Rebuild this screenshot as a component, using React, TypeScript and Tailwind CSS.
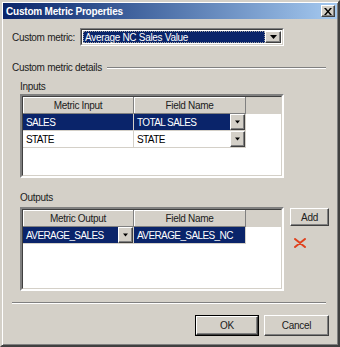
import React from 'react';

const raised =
  'border border-t-white border-l-white border-r-[#404040] border-b-[#404040] shadow-[inset_-1px_-1px_0_#808080]';

function Arrow({ size = 7 }: { size?: number }) {
  return (
    <svg width={size} height={4} viewBox="0 0 7 4">
      <path d="M0 0h7L3.5 4z" fill="#000" />
    </svg>
  );
}

function DropButton({ className = '' }: { className?: string }) {
  return (
    <div className={`flex items-center justify-center bg-[#d4d0c8] ${raised} ${className}`}>
      <Arrow size={5} />
    </div>
  );
}

function HeaderCell({ label, width }: { label: string; width: string }) {
  return (
    <div
      className={`${width} h-[17px] flex items-center justify-center bg-[#d4d0c8] border-r border-b border-r-[#808080] border-b-[#808080] shadow-[inset_1px_1px_0_#fff] text-[#202020]`}
    >
      {label}
    </div>
  );
}

function Cell({
  text,
  selected,
  dropdown,
  width,
}: {
  text: string;
  selected?: boolean;
  dropdown?: boolean;
  width: string;
}) {
  return (
    <div className={`${width} h-[17px] flex border-r border-b border-[#d4d0c8] bg-white`}>
      <div
        className={`flex-1 h-full flex items-center pl-[3px] overflow-hidden tracking-[-0.6px] ${
          selected ? 'bg-[#0a246a] text-white' : 'text-black'
        }`}
      >
        {text}
      </div>
      {dropdown && <DropButton className="w-[15px] h-full" />}
    </div>
  );
}

function Grid({ children }: { children: React.ReactNode }) {
  return (
    <div className="w-[264px] h-[84px] border-2 border-t-[#808080] border-l-[#808080] border-r-white border-b-white">
      <div className="w-full h-full bg-white border border-t-[#404040] border-l-[#404040] border-r-[#d4d0c8] border-b-[#d4d0c8] flex flex-col">
        {children}
      </div>
    </div>
  );
}

export default function App() {
  return (
    <div
      className="w-[340px] h-[347px] bg-[#d4d0c8] border-2 border-t-[#d4d0c8] border-l-[#d4d0c8] border-r-[#404040] border-b-[#404040] shadow-[inset_1px_1px_0_#fff,inset_-1px_-1px_0_#808080] p-[1px] flex flex-col text-[10px] leading-[13px] tracking-[-0.3px] whitespace-nowrap text-black"
      style={{ fontFamily: '"Liberation Sans", Arial, sans-serif' }}
    >
      {/* title bar */}
      <div className="h-[16px] flex items-center justify-between pl-[3px] pr-[2px] bg-gradient-to-r from-[#0a246a] to-[#a6caf0]">
        <span className="text-white font-bold text-[10px] tracking-[-0.2px]">Custom Metric Properties</span>
        <div className={`w-[14px] h-[12px] bg-[#d4d0c8] flex items-center justify-center ${raised}`}>
          <svg width="8" height="7" viewBox="0 0 8 7">
            <path d="M0 0h2l2 2.5L6 0h2L5 3.5 8 7H6L4 4.5 2 7H0l3-3.5z" fill="#000" />
          </svg>
        </div>
      </div>

      <div className="flex-1 flex flex-col pl-[9px]">
        {/* custom metric combo */}
        <div className="mt-[9px] flex items-center h-[18px]">
          <span className="w-[68px] text-[#202020]">Custom metric:</span>
          <div className="w-[204px] h-[18px] border border-t-[#808080] border-l-[#808080] border-r-white border-b-white">
            <div className="w-full h-full bg-white border border-t-[#404040] border-l-[#404040] border-r-[#d4d0c8] border-b-[#d4d0c8] flex p-[1px]">
              <div className="flex-1 bg-[#0a246a] text-white flex items-center pl-[2px] outline-1 outline-dotted outline-offset-[-1px] outline-[#a0a0a0]">
                Average NC Sales Value
              </div>
              <div className={`w-[16px] flex items-center justify-center bg-[#d4d0c8] ${raised}`}>
                <Arrow />
              </div>
            </div>
          </div>
        </div>

        {/* details heading */}
        <div className="mt-[15px] flex items-center h-[13px] pr-[11px]">
          <span className="text-[#202020]">Custom metric details</span>
          <div className="flex-1 ml-[5px] h-[2px] border-t border-t-[#808080] border-b border-b-white" />
        </div>

        <div className="ml-[8px] flex flex-col">
          <span className="mt-[6px] h-[13px] text-[#202020]">Inputs</span>
          <div className="mt-[1px]">
            <Grid>
              <div className="flex bg-[#d4d0c8]">
                <HeaderCell label="Metric Input" width="w-[111px]" />
                <HeaderCell label="Field Name" width="w-[112px]" />
              </div>
              <div className="flex">
                <Cell text="SALES" selected width="w-[111px]" />
                <Cell text="TOTAL SALES" selected dropdown width="w-[112px]" />
              </div>
              <div className="flex">
                <Cell text="STATE" width="w-[111px]" />
                <Cell text="STATE" dropdown width="w-[112px]" />
              </div>
            </Grid>
          </div>

          <span className="mt-[13px] h-[13px] text-[#202020]">Outputs</span>
          <div className="mt-[3px] flex items-start">
            <Grid>
              <div className="flex bg-[#d4d0c8]">
                <HeaderCell label="Metric Output" width="w-[111px]" />
                <HeaderCell label="Field Name" width="w-[112px]" />
              </div>
              <div className="flex">
                <Cell text="AVERAGE_SALES" selected dropdown width="w-[111px]" />
                <Cell text="AVERAGE_SALES_NC" selected width="w-[112px]" />
              </div>
            </Grid>
            <div className="ml-[6px] flex flex-col items-start">
              <button className={`w-[39px] h-[18px] mt-[1px] bg-[#d4d0c8] text-[#202020] ${raised}`}>
                Add
              </button>
              <svg className="mt-[12px] ml-[4px]" width="12" height="10" viewBox="0 0 12 10">
                <path d="M1 1l10 8M11 1L1 9" stroke="#e0401c" strokeWidth="2" strokeLinecap="round" />
              </svg>
            </div>
          </div>
        </div>

        {/* separator */}
        <div className="mt-[11px] mr-[11px] h-[2px] border-t border-t-[#808080] border-b border-b-white" />

        {/* buttons */}
        <div className="mt-[11px] flex justify-end gap-[5px] pr-[8px]">
          <button className="w-[64px] h-[21px] bg-[#d4d0c8] border border-black text-[#202020]">
            <div className={`w-full h-full flex items-center justify-center ${raised}`}>OK</div>
          </button>
          <button className={`w-[65px] h-[21px] bg-[#d4d0c8] text-[#202020] ${raised}`}>Cancel</button>
        </div>
      </div>
    </div>
  );
}
